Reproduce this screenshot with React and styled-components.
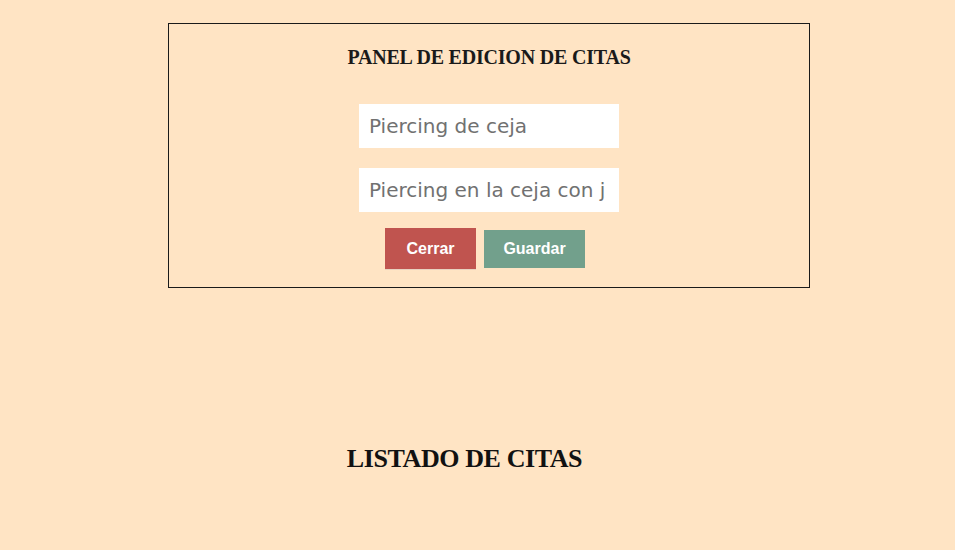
import styled, { createGlobalStyle } from "styled-components";

const GlobalStyle = createGlobalStyle`
  body {
    margin: 0;
    background: #ffe4c4;
    font-family: "Liberation Sans", Arial, sans-serif;
  }
`;

export default function App() {
  return (
    <>
      <GlobalStyle />
      <Page>
        <Panel>
          <PanelTitle>PANEL DE EDICION DE CITAS</PanelTitle>
          <Form>
            <Field type="text" placeholder="Piercing de ceja" />
            <Field type="text" placeholder="Piercing en la ceja con j" />
            <Actions>
              <Button type="button" $color="#c0544f" $width="91px" $outlined>
                Cerrar
              </Button>
              <Button type="button" $color="#72a08c" $width="101px">
                Guardar
              </Button>
            </Actions>
          </Form>
        </Panel>

        <ListSection>
          <ListTitle>LISTADO DE CITAS</ListTitle>
        </ListSection>
      </Page>
    </>
  );
}

const Page = styled.div`
  display: flex;
  flex-direction: column;
  min-height: 550px;
`;

const Panel = styled.section`
  box-sizing: border-box;
  width: 642px;
  margin: 23px 0 0 168px;
  padding: 22px 0 17px;
  border: 1px solid #1a1a1a;
  display: flex;
  flex-direction: column;
  align-items: center;
`;

const PanelTitle = styled.h2`
  margin: 0 0 36px;
  font-family: "Liberation Serif", "Times New Roman", serif;
  font-weight: bold;
  font-size: 20px;
  line-height: 22px;
  letter-spacing: -0.2px;
  color: #1a1a1a;
`;

const Form = styled.div`
  display: flex;
  flex-direction: column;
  align-items: center;
`;

const Field = styled.input`
  box-sizing: border-box;
  width: 260px;
  height: 44px;
  margin-bottom: 20px;
  padding: 0 10px;
  border: none;
  outline: none;
  background: #ffffff;
  font-family: "DejaVu Sans", Verdana, sans-serif;
  font-size: 20px;
  color: #6f6f6f;

  &::placeholder {
    color: #717171;
    opacity: 1;
  }

  &:nth-of-type(2) {
    margin-bottom: 16px;
  }
`;

const Actions = styled.div`
  display: flex;
  align-items: center;
  gap: 8px;
  margin-right: 8px;
`;

const Button = styled.button`
  box-sizing: border-box;
  width: ${(p) => p.$width};
  height: ${(p) => (p.$outlined ? "42px" : "38px")};
  padding: 0;
  border: none;
  border-bottom: ${(p) => (p.$outlined ? "1px solid #e8d2c0" : "none")};
  background: ${(p) => p.$color};
  color: #ffffff;
  font-family: "Liberation Sans", Arial, sans-serif;
  font-weight: bold;
  font-size: 16px;
  cursor: pointer;
`;

const ListSection = styled.section`
  width: 929px;
  margin-top: 155px;
  text-align: center;
`;

const ListTitle = styled.h2`
  margin: 0;
  font-family: "Liberation Serif", "Times New Roman", serif;
  font-weight: bold;
  font-size: 26px;
  line-height: 32px;
  letter-spacing: -0.4px;
  color: #111111;
`;
